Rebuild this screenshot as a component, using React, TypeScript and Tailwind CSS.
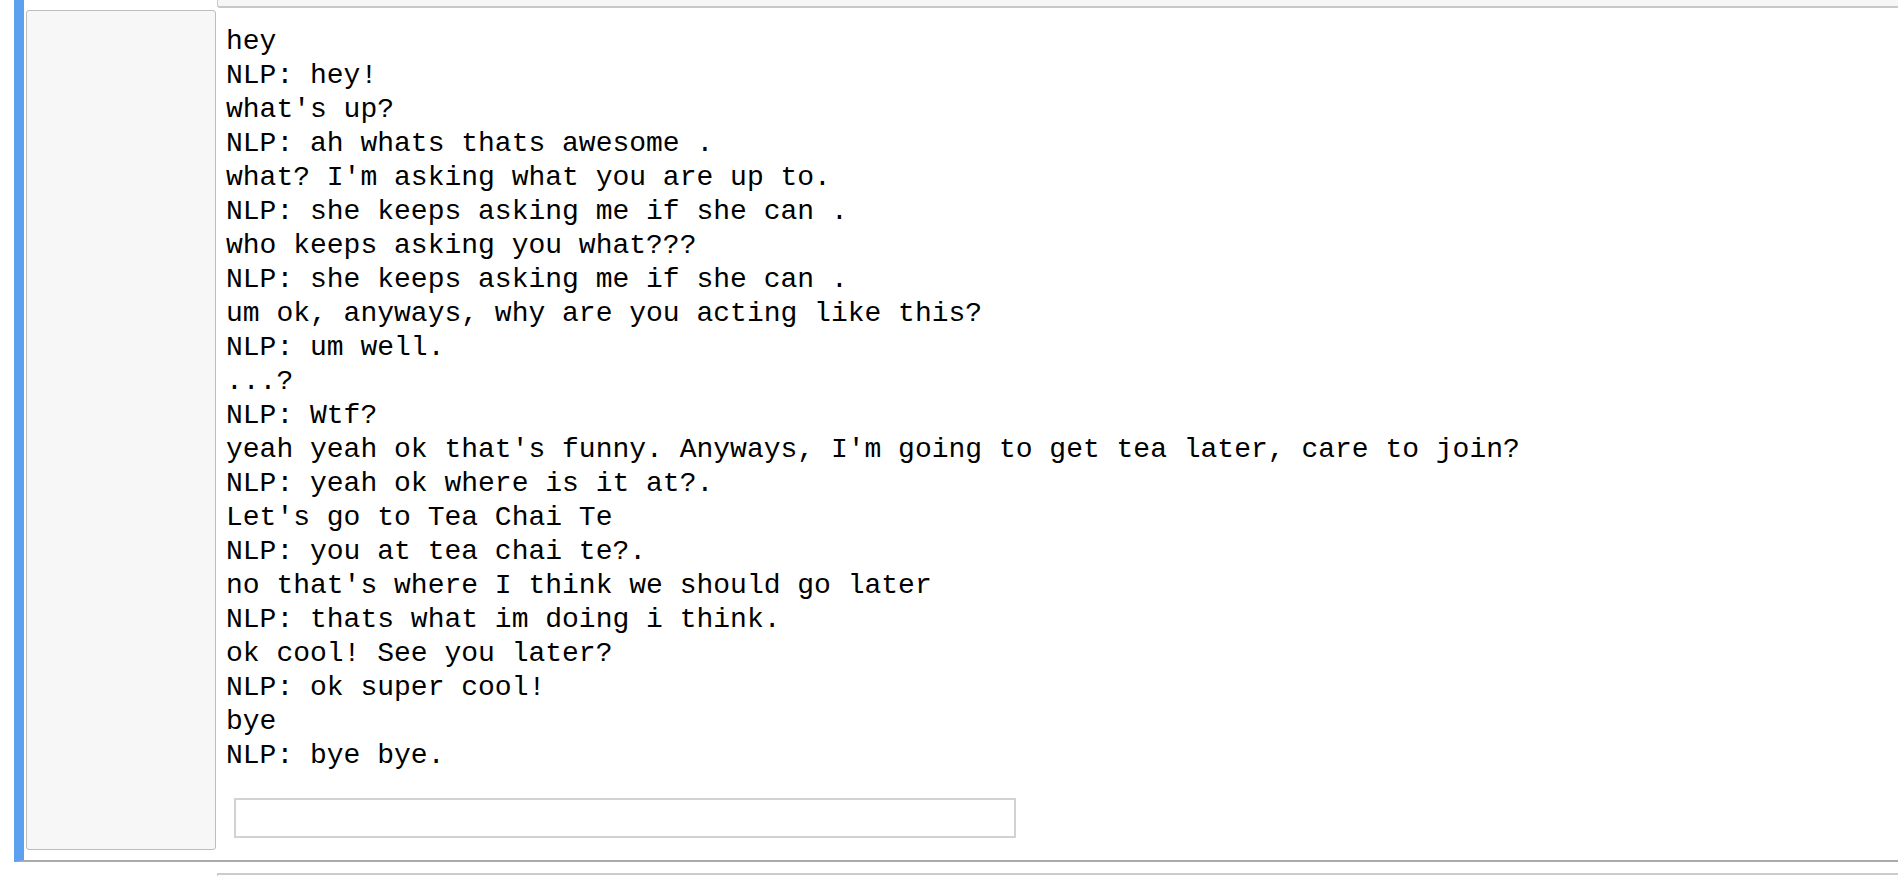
const lines = [
  "hey",
  "NLP: hey!",
  "what's up?",
  "NLP: ah whats thats awesome .",
  "what? I'm asking what you are up to.",
  "NLP: she keeps asking me if she can .",
  "who keeps asking you what???",
  "NLP: she keeps asking me if she can .",
  "um ok, anyways, why are you acting like this?",
  "NLP: um well.",
  "...?",
  "NLP: Wtf?",
  "yeah yeah ok that's funny. Anyways, I'm going to get tea later, care to join?",
  "NLP: yeah ok where is it at?.",
  "Let's go to Tea Chai Te",
  "NLP: you at tea chai te?.",
  "no that's where I think we should go later",
  "NLP: thats what im doing i think.",
  "ok cool! See you later?",
  "NLP: ok super cool!",
  "bye",
  "NLP: bye bye.",
];

const App = () => {
  return (
    <div className="w-[1898px] h-[876px] overflow-hidden bg-white">
      <div className="ml-[14px] flex border-l-[10px] border-l-[#5ba1f0] border-b-2 border-b-[#aaaaaa] pl-[2px] pb-[10px]">
        {/* sidebar */}
        <div className="mt-[10px] w-[190px] h-[840px] shrink-0 rounded-[3px] border border-[#bdbdbd] bg-[#f7f7f7]" />

        {/* chat column */}
        <div className="flex-1 flex flex-col">
          <div className="ml-px h-[8px] rounded-bl-[3px] border-l border-b-2 border-[#c8c8c8] bg-[#f6f6f6]" />
          <div className="mt-[17px] pl-[10px] font-['Liberation_Mono',monospace] text-[28px] leading-[34px] text-black whitespace-pre">
            {lines.map((l, i) => (
              <div key={i}>{l}</div>
            ))}
          </div>
          <input
            type="text"
            className="mt-[25px] ml-[18px] w-[782px] h-[40px] border-2 border-[#d2d2d2] bg-white outline-none"
          />
        </div>
      </div>
      <div className="ml-[217px] mt-[11px] h-[20px] border-t-2 border-l border-[#cccccc] bg-white" />
    </div>
  );
};

export default App;
